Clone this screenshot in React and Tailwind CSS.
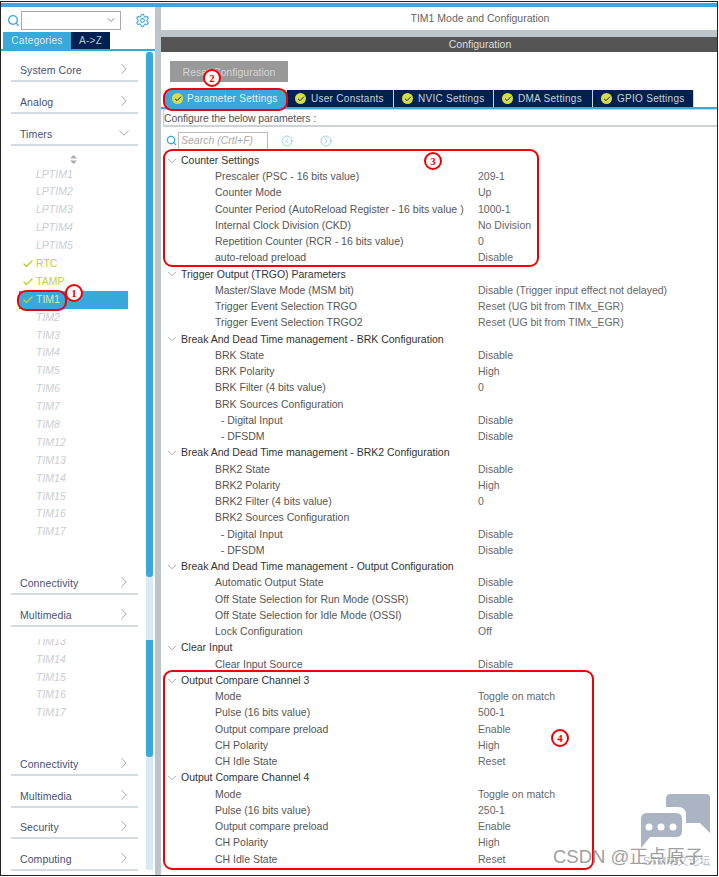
import React from "react";
import { Search, Settings, ChevronRight, ChevronDown, Check, CircleChevronLeft, CircleChevronRight } from "lucide-react";

const groups = [
  { title: "Counter Settings", rows: [
    ["Prescaler (PSC - 16 bits value)", "209-1"],
    ["Counter Mode", "Up"],
    ["Counter Period (AutoReload Register - 16 bits value )", "1000-1"],
    ["Internal Clock Division (CKD)", "No Division"],
    ["Repetition Counter (RCR - 16 bits value)", "0"],
    ["auto-reload preload", "Disable"],
  ]},
  { title: "Trigger Output (TRGO) Parameters", rows: [
    ["Master/Slave Mode (MSM bit)", "Disable (Trigger input effect not delayed)"],
    ["Trigger Event Selection TRGO", "Reset (UG bit from TIMx_EGR)"],
    ["Trigger Event Selection TRGO2", "Reset (UG bit from TIMx_EGR)"],
  ]},
  { title: "Break And Dead Time management - BRK Configuration", rows: [
    ["BRK State", "Disable"],
    ["BRK Polarity", "High"],
    ["BRK Filter (4 bits value)", "0"],
    ["BRK Sources Configuration", ""],
    ["  - Digital Input", "Disable"],
    ["  - DFSDM", "Disable"],
  ]},
  { title: "Break And Dead Time management - BRK2 Configuration", rows: [
    ["BRK2 State", "Disable"],
    ["BRK2 Polarity", "High"],
    ["BRK2 Filter (4 bits value)", "0"],
    ["BRK2 Sources Configuration", ""],
    ["  - Digital Input", "Disable"],
    ["  - DFSDM", "Disable"],
  ]},
  { title: "Break And Dead Time management - Output Configuration", rows: [
    ["Automatic Output State", "Disable"],
    ["Off State Selection for Run Mode (OSSR)", "Disable"],
    ["Off State Selection for Idle Mode (OSSI)", "Disable"],
    ["Lock Configuration", "Off"],
  ]},
  { title: "Clear Input", rows: [["Clear Input Source", "Disable"]] },
  { title: "Output Compare Channel 3", rows: [
    ["Mode", "Toggle on match"],
    ["Pulse (16 bits value)", "500-1"],
    ["Output compare preload", "Enable"],
    ["CH Polarity", "High"],
    ["CH Idle State", "Reset"],
  ]},
  { title: "Output Compare Channel 4", rows: [
    ["Mode", "Toggle on match"],
    ["Pulse (16 bits value)", "250-1"],
    ["Output compare preload", "Enable"],
    ["CH Polarity", "High"],
    ["CH Idle State", "Reset"],
  ]},
];

const timers = ["LPTIM1", "LPTIM2", "LPTIM3", "LPTIM4", "LPTIM5", "RTC", "TAMP", "TIM1", "TIM2", "TIM3", "TIM4", "TIM5", "TIM6", "TIM7", "TIM8", "TIM12", "TIM13", "TIM14", "TIM15", "TIM16", "TIM17"];

const tabs = [
  { label: "User Constants", width: "w-[107px]" },
  { label: "NVIC Settings", width: "w-[100px]" },
  { label: "DMA Settings", width: "w-[99px]" },
  { label: "GPIO Settings", width: "w-[101px]" },
];

const SideHead = ({ label, open, className }) => (
  <div className={`flex items-end justify-between ml-[10px] mr-[8px] pl-[9px] pb-[2px] border-b-2 border-[#d3dce3] text-[10.5px] tracking-[0.1px] text-[#45507a] ${className}`}>
    <span className="leading-[16px]">{label}</span>
    {open
      ? <ChevronDown className="w-[18px] h-[18px] mr-[5px] text-[#808890]" strokeWidth={1} />
      : <ChevronRight className="w-[18px] h-[18px] mr-[5px] text-[#808890]" strokeWidth={1} />}
  </div>
);

const TimerRow = ({ name }) => {
  const ok = name === "RTC" || name === "TAMP" || name === "TIM1";
  const selected = name === "TIM1";
  return (
    <div className={`h-[17.9px] shrink-0 flex items-center text-[10.5px] ml-[18px] ${selected ? "bg-[#39a9dc] text-[#d8e8b0] w-[109px]" : ""}`}>
      <span className="w-[17px] flex justify-center">
        {ok && <Check className="w-[12px] h-[12px] text-[#c3d02f]" strokeWidth={3} />}
      </span>
      <span className={ok ? (selected ? "" : "text-[#c3d02f]") : "italic text-[#c9ced3]"}>{name}</span>
    </div>
  );
};

const TabIcon = () => (
  <span className="w-[11px] h-[11px] rounded-full bg-[#d6dc4a] flex items-center justify-center shrink-0">
    <Check className="w-[8px] h-[8px] text-[#0a2a55]" strokeWidth={3} />
  </span>
);

const Callout = ({ n, className }) => (
  <div className={`absolute w-[18px] h-[18px] rounded-full bg-white border-2 border-[#ee0000] flex items-center justify-center text-[11px] font-bold text-[#ee0000] font-['Liberation_Serif',serif] ${className}`}>{n}</div>
);

const Mark = ({ className }) => (
  <div className={`absolute border-2 border-[#f00000] rounded-[9px] ${className}`} />
);

export default function App() {
  return (
    <div className="relative w-[719px] h-[877px] overflow-hidden bg-white font-['Liberation_Sans',sans-serif]">
      <div className="h-[875px] mt-[1px] mr-[1px] border border-[#222] flex flex-col">
        <div className="h-[1px] shrink-0 bg-white" />
        <div className="h-[4px] shrink-0 bg-[#39a9dc]" />
        <div className="flex flex-1 min-h-0">
          {/* left panel */}
          <div className="w-[154px] shrink-0 flex flex-col">
            <div className="h-[25px] shrink-0 flex items-center pl-[6px] pt-[1px]">
              <Search className="w-[13px] h-[13px] text-[#39a9dc]" strokeWidth={2.5} />
              <div className="w-[100px] h-[19px] ml-[1px] border border-[#aaa] flex items-center justify-end pr-[3px]">
                <ChevronDown className="w-[12px] h-[12px] text-[#666]" strokeWidth={1.5} />
              </div>
              <Settings className="w-[15px] h-[15px] ml-[14px] text-[#39a9dc]" strokeWidth={1.75} />
            </div>
            <div className="h-[19px] shrink-0 flex items-end pl-[2px] text-[10px] tracking-[0.3px] border-b-2 border-[#39a9dc]">
              <div className="h-[17px] w-[68px] bg-[#39a9dc] text-[#dceef8] flex items-center justify-center">Categories</div>
              <div className="h-[17px] w-[39px] bg-[#002052] text-[#b8c4d4] flex items-center justify-center">A-&gt;Z</div>
            </div>
            <div className="flex flex-1 min-h-0">
              <div className="w-[145px] shrink-0 overflow-hidden">
                <SideHead label="System Core" className="h-[31px]" />
                <SideHead label="Analog" className="h-[31.5px]" />
                <SideHead label="Timers" open className="h-[32px]" />
                <div className="h-[20px] flex justify-center pt-[9px]">
                  <svg width="7" height="9" viewBox="0 0 7 9">
                    <path d="M3.5 0 7 3.5H0zM3.5 9 7 5.5H0z" fill="#a8adb2" />
                  </svg>
                </div>
                {timers.map((t) => <TimerRow key={t} name={t} />)}
                <SideHead label="Connectivity" className="h-[54px]" />
                <SideHead label="Multimedia" className="h-[31.5px]" />
                <div className="mt-[12.5px] h-[83px] overflow-hidden flex flex-col justify-end">
                  {["TIM13", "TIM14", "TIM15", "TIM16", "TIM17"].map((t) => <TimerRow key={t} name={t} />)}
                </div>
                <SideHead label="Connectivity" className="h-[54px]" />
                <SideHead label="Multimedia" className="h-[31.5px]" />
                <SideHead label="Security" className="h-[31.5px]" />
                <SideHead label="Computing" className="h-[31.5px]" />
              </div>
              <div className="w-[7px] mt-[1px] mb-[5px] bg-[#dbe9f5] flex flex-col">
                <div className="h-[525px] bg-[#39a9dc] rounded-[3px]" />
                <div className="h-[63px]" />
                <div className="h-[117px] bg-[#39a9dc] rounded-b-[3px]" />
              </div>
            </div>
          </div>
          {/* divider */}
          <div className="w-[6px] shrink-0 bg-[#bcc5ca]" />
          {/* right panel */}
          <div className="flex-1 min-w-0 flex flex-col">
            <div className="h-[23px] shrink-0 flex items-center justify-center pl-[82px] text-[10.5px] text-[#666]">TIM1 Mode and Configuration</div>
            <div className="h-[7px] shrink-0 bg-[#bcc5ca]" />
            <div className="h-[15px] shrink-0 bg-[#555] flex items-center justify-center pl-[82px] text-[10.5px] text-[#ddd]">Configuration</div>
            <div className="h-[9px] shrink-0" />
            <div className="h-[21px] w-[118px] ml-[9px] pt-[2px] shrink-0 bg-[#999] flex items-center justify-center text-[10.5px] text-[#d4d4d4]">Reset Configuration</div>
            <div className="h-[8px] shrink-0" />
            <div className="h-[17px] shrink-0 flex pl-[4px] text-[10px] tracking-[0.28px] whitespace-nowrap">
              <div className="w-[122px] bg-[#39a9dc] text-[#e6f2f8] flex items-center gap-[4px] pl-[7px] rounded-t-[3px]"><TabIcon />Parameter Settings</div>
              {tabs.map((t) => (
                <div key={t.label} className={`${t.width} bg-[#002052] text-[#c9d2de] flex items-center gap-[5px] pl-[8px] border-r border-[#c8d6e4]`}><TabIcon />{t.label}</div>
              ))}
            </div>
            <div className="h-[3px] shrink-0 bg-[#39a9dc] border-b border-[#cfd6db]" />
            <div className="h-[17px] ml-[2px] pt-[3px] shrink-0 border-l border-b-2 border-[#cdd2d6] flex items-center text-[10.5px] tracking-[-0.1px] text-[#555]">Configure the below parameters :</div>
            <div className="h-[5px] shrink-0" />
            <div className="h-[17px] shrink-0 flex items-center pl-[5px]">
              <Search className="w-[11px] h-[11px] text-[#39a9dc]" strokeWidth={3} />
              <div className="w-[90px] h-[17px] ml-[1px] border border-[#bbb] border-b-0 pl-[2px] flex items-center text-[10.5px] italic text-[#aaa]">Search (Crtl+F)</div>
              <CircleChevronLeft className="w-[12px] h-[12px] ml-[13px] text-[#7cc2e8]" strokeWidth={1.5} />
              <CircleChevronRight className="w-[12px] h-[12px] ml-[27px] text-[#7cc2e8]" strokeWidth={1.5} />
            </div>
            <div className="pt-[3.5px] text-[10.5px]">
              {groups.map((g) => (
                <div key={g.title}>
                  <div className="h-[16.26px] flex items-center text-[#333]">
                    <ChevronDown className="w-[14px] h-[14px] ml-[4px] mr-[2px] text-[#888]" strokeWidth={1.25} />
                    {g.title}
                  </div>
                  {g.rows.map(([k, v], i) => (
                    <div key={i} className="h-[16.26px] flex items-center text-[#555]">
                      <span className="w-[317px] pl-[54px] shrink-0 whitespace-pre">{k}</span>
                      <span className="text-[#666]">{v}</span>
                    </div>
                  ))}
                </div>
              ))}
            </div>
          </div>
        </div>
      </div>

      {/* annotations drawn over the screenshot */}
      <Mark className="left-[17px] top-[290px] w-[50px] h-[21px]" />
      <Mark className="left-[163px] top-[88px] w-[125px] h-[23px]" />
      <Mark className="left-[163px] top-[149px] w-[376px] h-[118px]" />
      <Mark className="left-[163px] top-[670px] w-[431px] h-[200px]" />
      <Callout n="1" className="left-[65px] top-[284px]" />
      <Callout n="2" className="left-[203px] top-[69px]" />
      <Callout n="3" className="left-[424px] top-[152px]" />
      <Callout n="4" className="left-[551px] top-[729px]" />

      {/* watermark */}
      <svg className="absolute left-[640px] top-[793px]" width="72" height="60" viewBox="0 0 72 60">
        <path d="M26 14V6q0-5 5-5h35q4 0 4 4v35l-10-10H46v-8q0-8-8-8z" fill="#aab4c2" />
        <path d="M7 20h29q6 0 6 6v12q0 6-6 6H10l-9 11V26q0-6 6-6z" fill="#aab4c2" />
        <circle cx="9" cy="34" r="3.5" fill="#fff" /><circle cx="21" cy="34" r="3.5" fill="#fff" /><circle cx="33" cy="34" r="3.5" fill="#fff" />
      </svg>
      <div className="absolute left-[643px] top-[854px] text-[11px] leading-[14px] text-[#b5c0cc] whitespace-nowrap font-['Liberation_Sans','Noto_Sans_CJK_SC',sans-serif]">STM中文论坛</div>
      <div className="absolute left-[553px] top-[847px] text-[18.5px] leading-[20px] text-[#888] opacity-80 whitespace-nowrap font-['Liberation_Sans','Noto_Sans_CJK_SC',sans-serif]">CSDN @正点原子</div>
    </div>
  );
}
